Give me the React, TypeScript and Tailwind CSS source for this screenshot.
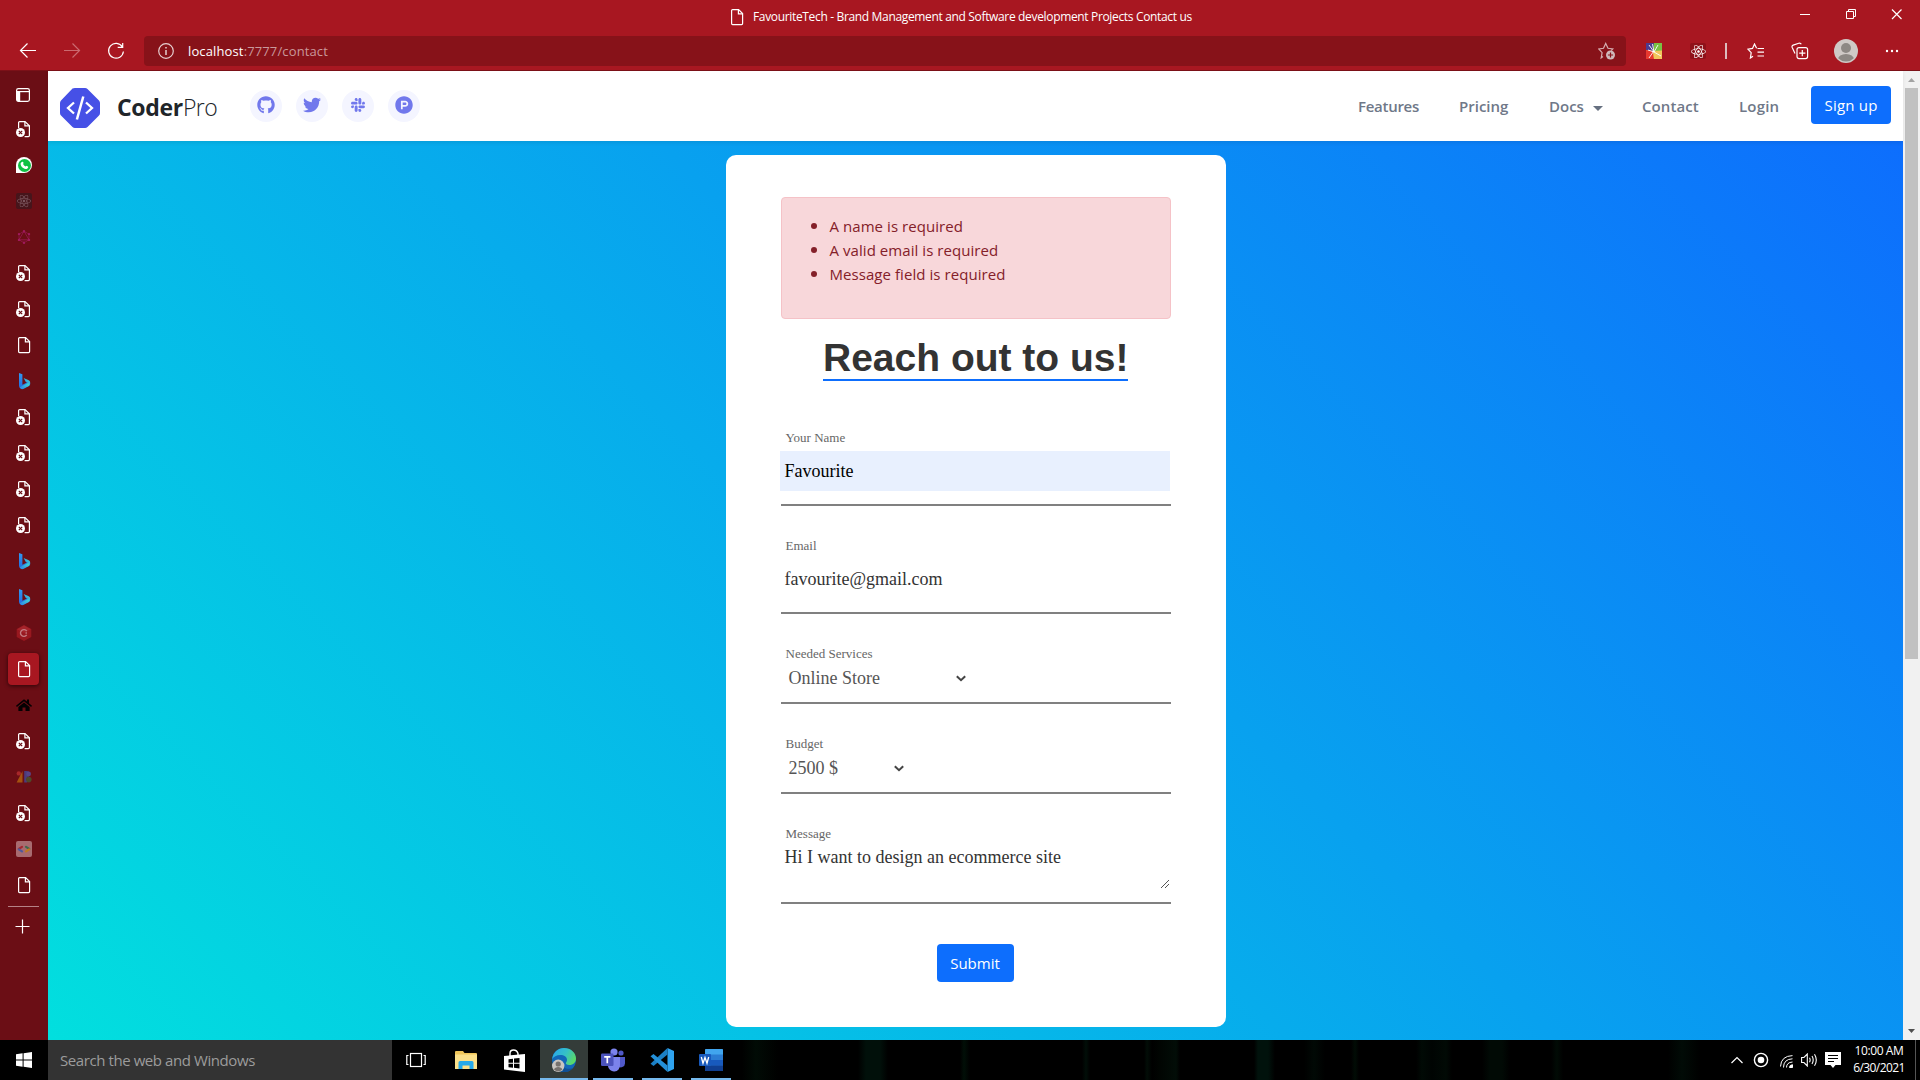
import type { ReactNode } from "react";
import { FaGithub, FaTwitter, FaSlack, FaProductHunt, FaReact } from "react-icons/fa";
import { SiGraphql } from "react-icons/si";

const PageIcon = () => (
  <svg width="16" height="18" viewBox="0 0 16 18" fill="none" stroke="#fff" strokeWidth="1.2" className="shrink-0">
    <path d="M2.6 2.6a1 1 0 0 1 1-1h6l4 4v10a1 1 0 0 1-1 1h-9a1 1 0 0 1-1-1z" />
    <path d="M9.4 1.8v4h4" />
  </svg>
);

const DeadPageIcon = () => (
  <svg width="16" height="18" viewBox="0 0 16 18" fill="none" className="shrink-0">
    <path d="M2.6 8V2.6a1 1 0 0 1 1-1h5.4l4.4 4.2v9.8a1 1 0 0 1-1 1H8.6" stroke="#fff" strokeWidth="1.2" />
    <path d="M8.9 1.8v4.1h4.4" stroke="#fff" strokeWidth="1.2" />
    <circle cx="4.5" cy="12.500" r="4.5" fill="#fff" />
    <path d="M2.800 10.800l3.400 3.400M6.200 10.800l-3.400 3.400" stroke="#6b0e15" strokeWidth="1.200" />
  </svg>
);

const BingIcon = () => (
  <svg width="16" height="18" viewBox="0 0 16 18">
    <defs>
      <linearGradient id="bingA" x1="0" y1="0" x2="0" y2="1">
        <stop offset="0" stopColor="#2f9af0" />
        <stop offset="1" stopColor="#2367e0" />
      </linearGradient>
      <linearGradient id="bingB" x1="0" y1="1" x2="1" y2="0">
        <stop offset="0" stopColor="#2b7bea" />
        <stop offset="1" stopColor="#43e0d0" />
      </linearGradient>
    </defs>
    <path d="M3 1l3.4 1.3v10.4L9 11.4l3-1.6 2 .8c.6 1.4 0 2.6-1 3.3L6.6 17 3 14.6z" fill="url(#bingA)" />
    <path d="M7.6 6l4.6 2c2 .9 2.4 2.6 1.6 4.4-1-1-2.2-1.5-4-2.3z" fill="url(#bingB)" />
    <path d="M3.2 14.7c1.5.6 2.6-.4 4.4-1.4l4.4-2.4c2 .4 2.2 2 .8 3L7.6 16.8c-1.6.9-3.6.2-4.4-2.1z" fill="url(#bingB)" />
  </svg>
);

const sidebarTabs: { key: string; icon: ReactNode; active?: boolean }[] = [
  { key: "d1", icon: <DeadPageIcon /> },
  {
    key: "whatsapp",
    icon: (
      <div className="grid size-4 place-items-center rounded-full rounded-bl-[3px] bg-white">
        <div className="grid size-[13px] place-items-center rounded-full bg-[#0fc143]">
          <svg width="9" height="9" viewBox="0 0 9 9">
            <path d="M2.2.8c.6-.4 1 .1 1.3 1 .2.6-.5.9-.4 1.2.5 1.2 1.4 2 2.5 2.5.4.1.7-.8 1.1-.6 1.3.5 1.9.7 1.4 1.5C7 8.4 5.1 8.2 3.2 6.9 1.7 5.9.6 4.3.6 2.9c0-.9.6-1.600 1.600-2.100z" fill="#fff" />
          </svg>
        </div>
      </div>
    ),
  },
  {
    key: "react",
    icon: (
      <div className="grid size-4 place-items-center rounded-[2px] bg-[#46151b]">
        <FaReact className="size-[14px] text-[#7b565e]" />
      </div>
    ),
  },
  { key: "graphql", icon: <SiGraphql className="size-[14px] text-[#a01a5c]" /> },
  { key: "d2", icon: <DeadPageIcon /> },
  { key: "d3", icon: <DeadPageIcon /> },
  { key: "p1", icon: <PageIcon /> },
  { key: "b1", icon: <BingIcon /> },
  { key: "d4", icon: <DeadPageIcon /> },
  { key: "d5", icon: <DeadPageIcon /> },
  { key: "d6", icon: <DeadPageIcon /> },
  { key: "d7", icon: <DeadPageIcon /> },
  { key: "b2", icon: <BingIcon /> },
  { key: "b3", icon: <BingIcon /> },
  {
    key: "c",
    icon: (
      <svg width="16" height="16" viewBox="0 0 16 16">
        <path d="M8 0l7.300 4v8L8 16 .7 12V4z" fill="#98181f" />
        <path d="M8 .6l6.800 3.700L8 8 1.200 4.300z" fill="#a5242b" />
        <path d="M10.700 6.100A3.400 3.400 0 1 0 10.700 9.900M10.900 8H9.500" fill="none" stroke="#c27a80" strokeWidth="1.400" />
      </svg>
    ),
  },
  { key: "p2", icon: <PageIcon />, active: true },
  {
    key: "home",
    icon: (
      <svg width="16" height="14" viewBox="0 0 16 14" fill="#050102">
        <path d="M8 1.200L0 7.800l.9 1.100L8 3.200l7.100 5.700.9-1.100-3-2.500V1.600h-2v2z" />
        <path d="M2.400 8.900L8 4.400l5.600 4.500V13H9.500V9.400h-3V13H2.400z" />
      </svg>
    ),
  },
  { key: "d8", icon: <DeadPageIcon /> },
  {
    key: "28",
    icon: (
      <svg width="16" height="12" viewBox="0 0 16 12">
        <circle cx="2.800" cy="2.400" r="2.200" fill="#a8272a" />
        <path d="M6.500 0v11.500H.6z" fill="#a5520f" />
        <path d="M8.200 0h2.600a3 3 0 0 1 0 6 3 3 0 0 1 0 5.500H8.200z" fill="#4b3c7c" />
        <circle cx="12.600" cy="3" r="2.400" fill="#574486" />
        <circle cx="12.800" cy="8.600" r="2.800" fill="#4e4a2a" />
      </svg>
    ),
  },
  { key: "d9", icon: <DeadPageIcon /> },
  {
    key: "dev",
    icon: (
      <svg width="16" height="16" viewBox="0 0 16 16" fill="none" strokeWidth="2.200" strokeLinecap="round">
        <rect width="16" height="16" rx="2" fill="#a86b70" />
        <path d="M6 5.800L2.800 7.900" stroke="#a5262f" />
        <path d="M2.800 8.300L6 10.400" stroke="#4f5a9c" />
        <path d="M10 5.800l3.200 2.100" stroke="#3d6a4e" />
        <path d="M13.200 8.300L10 10.400" stroke="#c07a1e" />
      </svg>
    ),
  },
  { key: "p3", icon: <PageIcon /> },
];

function TitleBar() {
  return (
    <div className="flex h-9 items-start text-white">
      <div className="flex h-[33px] items-center pl-[729px]">
        <PageIcon />
        <span className="ml-2 whitespace-nowrap text-[12px] tracking-[-0.34px]">
          FavouriteTech - Brand Management and Software development Projects Contact us
        </span>
      </div>
      <svg width="104" height="12" viewBox="0 0 104 12" fill="none" stroke="#fff" className="mt-2 mr-[17px] ml-auto">
        <path d="M1 6.500h10" />
        <path d="M47.500 3.500h7v7h-7zM49.500 3.500v-2h7v7h-2" />
        <path d="M93 1.500l9.500 9.500M102.500 1.500L93 11" strokeWidth="1.200" />
      </svg>
    </div>
  );
}

function AddressBar() {
  return (
    <div className="flex h-[34px] items-start">
      <svg width="144" height="30" viewBox="0 0 144 30" fill="none" stroke="#fff" strokeWidth="1.200">
        <path d="M36 14.500H20.500M27.500 7.500l-7 7 7 7" />
        <path d="M64 14.500h15.500M72.500 7.500l7 7-7 7" stroke="#cb6a70" />
        <path d="M122.400 11A7.400 7.400 0 1 0 123.400 15.500M122.700 7v4.300h-5" />
      </svg>
      <div className="flex h-[30px] w-[1482px] items-center rounded-[4px] bg-[#871219]">
        <svg width="16" height="16" viewBox="0 0 16 16" fill="none" stroke="#e6cfd0" strokeWidth="1.200" className="ml-[14px]">
          <circle cx="8" cy="8" r="7.300" />
          <path d="M8 7v5M8 4v1.500" strokeWidth="1.500" />
        </svg>
        <div className="ml-[14px] pt-px text-[13px] tracking-[0.13px] text-[#c9989b]">
          <span className="text-white">localhost</span>:7777/contact
        </div>
        <svg width="18" height="18" viewBox="0 0 18 18" className="mr-[10px] ml-auto">
          <path d="M5 14.500L3.200 15.800l.9-5.200L.8 7l4.700-.7L7.700 1.500 10 6.300l4.800.7-1.600 1.700" fill="none" stroke="#d5adb0" strokeWidth="1.200" />
          <circle cx="12.500" cy="13" r="4.500" fill="#cfb9ba" />
          <path d="M12.500 10.400v5.200M9.900 13h5.200" stroke="#871219" strokeWidth="1.200" />
        </svg>
      </div>
      <div className="flex h-[30px] flex-1 items-center">
        <svg width="16" height="16" viewBox="0 0 16 16" className="ml-5">
          <rect width="16" height="16" rx="1" fill="#e8b84b" />
          <path d="M0 0h9L7 8 0 7z" fill="#4c3a8f" />
          <path d="M8 0h8v8L7 9z" fill="#79c143" />
          <path d="M0 7l7 1 1 8H0z" fill="#e8392f" />
          <path d="M7 8l9-.5V16H8z" fill="#f2c75c" />
          <path d="M8 9L3 2M8 9L6.500 1M8 9l4-7M8 9L2 7M7.500 8.500L3 15M8 9l7 4" stroke="#fff" strokeWidth=".9" />
        </svg>
        <div className="ml-7 grid size-4 place-items-center rounded-[2px] bg-[#8f1119]">
          <FaReact className="size-[15px] text-white" />
        </div>
        <div className="ml-[19px] h-4 w-[2px] bg-[#dcbcbe]" />
        <svg width="18" height="16" viewBox="0 0 18 16" fill="none" stroke="#fff" strokeWidth="1.200" className="ml-[20px]">
          <path d="M6 13.200L3.400 15l.8-5.300L.9 6.100l4.600-.7L7.500 1l2.100 4.300" />
          <path d="M10.500 5.500H17M10.500 9.200H17M10.500 13H17" />
        </svg>
        <svg width="18" height="18" viewBox="0 0 18 18" fill="none" stroke="#fff" strokeWidth="1.200" className="ml-[26px]">
          <path d="M4 11.500L1.200 5.500c-.5-1.200 0-2 1-2.400L7.800 1.200c1-.3 2 .1 2.500 1.100" />
          <rect x="6" y="5.600" width="10.600" height="11" rx="2" />
          <path d="M11.300 8v6.200M8.200 11.100h6.200" />
        </svg>
        <svg width="24" height="24" viewBox="0 0 24 24" className="ml-[25px]">
          <defs>
            <clipPath id="avatar"><circle cx="12" cy="12" r="10.600" /></clipPath>
          </defs>
          <circle cx="12" cy="12" r="12" fill="#cfc9c6" />
          <g clipPath="url(#avatar)" fill="#8d8884">
            <circle cx="12" cy="9" r="5" />
            <ellipse cx="12" cy="20.500" rx="8" ry="5.500" />
          </g>
        </svg>
        <svg width="14" height="4" viewBox="0 0 14 4" fill="#fff" className="ml-[27px]">
          <circle cx="2" cy="2" r="1.200" />
          <circle cx="7" cy="2" r="1.200" />
          <circle cx="12" cy="2" r="1.200" />
        </svg>
      </div>
    </div>
  );
}

function Sidebar() {
  return (
    <aside className="flex w-12 flex-col bg-[#6b0e15] pt-2">
      <div className="grid h-8 place-items-center">
        <svg width="16" height="16" viewBox="0 0 16 16" className="-translate-x-px">
          <rect x="1.600" y="1.600" width="12.800" height="12.800" rx="1.800" fill="none" stroke="#fff" strokeWidth="1.200" />
          <path d="M1.600 4.600h12.800" stroke="#fff" strokeWidth="1.200" />
          <path d="M1.600 4.600h3.600v9.800H2.800l-1.200-1z" fill="#fff" />
        </svg>
      </div>
      {sidebarTabs.map((t) => (
        <div key={t.key} className="grid h-9 place-items-center">
          {t.active ? (
            <div className="mr-[1px] grid h-8 w-[31px] place-items-center rounded-[4px] bg-[#a81721] pl-px shadow-[0_1px_4px_rgba(0,0,0,0.6)]">
              {t.icon}
            </div>
          ) : (
            t.icon
          )}
        </div>
      ))}
      <div className="mx-2 mt-[3px] h-px w-[31px] bg-[#b58286]" />
      <svg width="16" height="16" viewBox="0 0 16 16" stroke="#fff" strokeWidth="1.200" className="mt-3 ml-[15px]">
        <path d="M7.500.5v14M.5 7.500h14" />
      </svg>
    </aside>
  );
}

const Badge = ({ children }: { children: ReactNode }) => (
  <div className="grid size-8 place-items-center rounded-full bg-[#f4f5ff] pb-0.5 text-[18px] text-[#7178ec]">{children}</div>
);

function Navbar() {
  return (
    <header className="z-10 flex h-[70px] shrink-0 items-start bg-white text-[15px] font-semibold text-[#6f7888] shadow-[0_2px_4px_rgba(0,0,0,0.08)]">
      <svg width="40" height="40" viewBox="0 0 40 40" className="mt-[17px] ml-3">
        <path d="M12.500.5Q13.500 0 15 0h10q1.500 0 2.500 1L39 12.500q1 1 1 2.500v10q0 1.500-1 2.500L27.500 39q-1 1-2.500 1H15q-1.500 0-2.500-1L1 27.500Q0 26.500 0 25V15q0-1.500 1-2.500z" fill="#4650e6" />
        <path d="M14 14.500L8 20l6 5.500M26 14.500l6 5.500-6 5.500" fill="none" stroke="#fff" strokeWidth="2.300" />
        <path d="M23.300 8.500L16.900 31.500" stroke="#fff" strokeWidth="2.500" />
      </svg>
      <div className="ml-[17px] h-[70px] w-[116px] text-[23px] leading-[72px] text-[#212529]">
        <span className="font-bold tracking-[-0.3px]">Coder</span>
        <span className="font-light tracking-[-0.6px]">Pro</span>
      </div>
      <div className="mt-[19px] ml-[17px] flex gap-[14px]">
        <Badge><FaGithub /></Badge>
        <Badge><FaTwitter /></Badge>
        <Badge><FaSlack className="text-[16px]" /></Badge>
        <Badge><FaProductHunt /></Badge>
      </div>
      <nav className="mr-3 ml-auto flex leading-[71px]">
        <span className="w-[101px] tracking-[-0.28px]">Features</span>
        <span className="w-[90px]">Pricing</span>
        <span className="flex w-[93px] items-center">
          <span className="w-[35px]">Docs</span>
          <svg width="10" height="5" viewBox="0 0 10 5" className="mt-1 ml-[9px]">
            <path d="M0 0h10L5 5z" fill="#667080" />
          </svg>
        </span>
        <span className="w-[97px] tracking-[0.1px]">Contact</span>
        <span className="w-[72px] tracking-[0.2px]">Login</span>
        <button className="mt-[15px] h-[38px] w-20 rounded-[4px] bg-[#0d6efd] text-[15px] leading-[38px] font-medium tracking-[0.2px] text-white">
          Sign up
        </button>
      </nav>
    </header>
  );
}

const Label = ({ children }: { children: ReactNode }) => (
  <div className="mt-8 h-4 pl-[5px] text-[13px] leading-4 text-[#666]">{children}</div>
);

const Chevron = () => (
  <svg width="10" height="7" viewBox="0 0 10 7" fill="none" stroke="#444" strokeWidth="2" className="mt-px">
    <path d="M.8 1.200L5 5.200l4.200-4" />
  </svg>
);

function ContactCard() {
  return (
    <section className="mt-[14px] h-[872px] w-[500px] rounded-[10px] bg-white px-[55px] pt-[42px]">
      <div className="h-[122px] rounded-[4px] border border-[#f5c2c7] bg-[#f8d7da] px-4 pt-[15px] text-[15px] leading-6 tracking-[0.06px] text-[#842029]">
        <ul className="list-disc pl-8 marker:text-[18px]">
          <li className="h-6">A name is required</li>
          <li className="h-6">A valid email is required</li>
          <li className="h-6">Message field is required</li>
        </ul>
      </div>
      <h1 className="mx-auto mt-4 h-[46px] w-[305px] border-b-2 border-[#0d6efd] text-center font-['Liberation_Sans',sans-serif] text-[39px] leading-[46px] font-bold whitespace-nowrap text-[#333]">
        Reach out to us!
      </h1>
      <form className="mt-[17px] flex flex-col font-['Liberation_Serif',serif] text-[18px] text-[#333]">
        <div className="h-[108px] border-b-2 border-[#808080]">
          <Label>Your Name</Label>
          <div className="mt-[5px] -ml-px h-10 w-[390px] bg-[#e8f0fe] pl-[5px] leading-10 text-black">Favourite</div>
        </div>
        <div className="h-[108px] border-b-2 border-[#808080]">
          <Label>Email</Label>
          <div className="mt-[5px] h-10 pl-1 leading-10">favourite@gmail.com</div>
        </div>
        <div className="h-[90px] border-b-2 border-[#808080]">
          <Label>Needed Services</Label>
          <div className="mt-1 flex h-6 items-center pl-2 leading-6 text-[#555]">
            <span className="w-[167px]">Online Store</span>
            <Chevron />
          </div>
        </div>
        <div className="h-[90px] border-b-2 border-[#808080]">
          <Label>Budget</Label>
          <div className="mt-1 flex h-6 items-center pl-2 leading-6 text-[#555]">
            <span className="w-[105px]">2500 $</span>
            <Chevron />
          </div>
        </div>
        <div className="h-[110px] border-b-2 border-[#808080]">
          <Label>Message</Label>
          <div className="mt-[3px] flex h-12 items-end justify-between pr-[2px] pl-1">
            <span className="h-12 leading-6">Hi I want to design an ecommerce site</span>
            <svg width="8" height="8" viewBox="0 0 8 8" stroke="#555" className="mb-[5px]">
              <path d="M0 8l8-8M4 8l4-4" />
            </svg>
          </div>
        </div>
        <button
          type="button"
          className="mt-10 ml-[156px] h-[38px] w-[77px] rounded-[4px] bg-[#0d6efd] font-['Open_Sans',sans-serif] text-[15px] leading-[38px] text-white"
        >
          Submit
        </button>
      </form>
    </section>
  );
}

function Scrollbar() {
  return (
    <div className="flex w-[17px] flex-col items-center bg-[#f1f1f1]">
      <svg width="17" height="17" viewBox="0 0 17 17"><path d="M5 11h7L8.500 7z" fill="#a3a3a3" /></svg>
      <div className="h-[571px] w-[13px] bg-[#c1c1c1]" />
      <svg width="17" height="17" viewBox="0 0 17 17" className="mt-auto"><path d="M5 6h7l-3.500 4z" fill="#505050" /></svg>
    </div>
  );
}

const TaskItem = ({ children, width, current }: { children: ReactNode; width: string; current?: boolean }) => (
  <div className={`${width} ${current ? "bg-[#343c39]" : ""} flex h-10 flex-col items-center`}>
    <div className="grid h-[38px] place-items-center pt-[2px]">{children}</div>
    <div className="h-0.5 w-full bg-[#76b9ed]" />
  </div>
);

function Taskbar() {
  return (
    <footer className="flex h-10 items-center bg-black bg-[linear-gradient(90deg,transparent_742px,#010b05_756px,transparent_778px,transparent_858px,#01100a_866px,#01100a_880px,transparent_888px,transparent_960px,#010f07_964px,transparent_970px,transparent_1082px,#010e08_1086px,transparent_1090px,transparent_1144px,#020d07_1147px,transparent_1152px,#010502_1160px,#020d07_1176px,transparent_1180px,transparent_1254px,#01120c_1258px,#01120c_1268px,transparent_1275px,transparent_1304px,#010905_1314px,transparent_1325px,transparent_1351px,#010c05_1355px,transparent_1359px,transparent_1416px,#010a05_1422px,#000402_1432px,#010a05_1446px,transparent_1452px,transparent_1482px,#010a05_1490px,#010a05_1502px,transparent_1510px,transparent_1551px,#010b05_1557px,transparent_1563px,transparent_1668px,#010b06_1682px,transparent_1700px)] text-white">
      <div className="grid w-12 place-items-center">
        <svg width="16" height="16" viewBox="0 0 16 16" fill="#fff">
          <path d="M0 2.300L6.600 1.300v6.300H0zM7.600 1.200L16 0v7.600H7.600zM0 8.500h6.600v6.300L0 13.800zM7.600 8.500H16V16l-8.400-1.200z" />
        </svg>
      </div>
      <div className="h-10 w-[344px] bg-[#333] pl-3 text-[15px] leading-[41px] tracking-[-0.42px] text-[#9c9c9c]">
        Search the web and Windows
      </div>
      <svg width="20" height="16" viewBox="0 0 20 16" fill="none" stroke="#fff" strokeWidth="1.200" className="ml-[14px]">
        <rect x="4.500" y="1.500" width="11" height="13" />
        <path d="M2.500 3.500H.8v9h1.700M17.500 3.500h1.700v9h-1.700" />
      </svg>
      <svg width="22" height="18" viewBox="0 0 22 18" className="ml-[29px]">
        <path d="M0 1.200Q0 0 1 0h7l1.500 2H21q1 0 1 1v14q0 1-1 1H1q-1 0-1-1z" fill="#f0c65a" />
        <path d="M0 3.500h22V18H0z" fill="#fbe08a" />
        <path d="M3.500 18v-6.500Q3.500 10 5 10h12q1.500 0 1.500 1.500V18h-4v-3.500h-7V18z" fill="#26a9ea" />
      </svg>
      <svg width="21" height="23" viewBox="0 0 21 23" className="ml-[27px]">
        <path d="M6 7V4.500Q6 1 9.500 1T14 4.500V6" fill="none" stroke="#fff" strokeWidth="1.400" />
        <path d="M0 7l21-2v18L0 20.500z" fill="#fff" />
        <path d="M4.500 10.200l4.500-.5v4H4.500zM10 9.600l5.500-.6v4.700H10zM4.500 14.700H9v4l-4.500-.5zM10 14.700h5.500v4.700l-5.500-.6z" fill="#000" />
      </svg>
      <div className="ml-[15px] flex gap-[5px]">
        <TaskItem width="w-12" current>
          <svg width="24" height="24" viewBox="0 0 24 24">
            <defs>
              <linearGradient id="edgeTop" x1="0" y1="0.300" x2="1" y2="0.700">
                <stop offset="0" stopColor="#2aa9e8" />
                <stop offset="0.500" stopColor="#35c1c6" />
                <stop offset="1" stopColor="#5fdc5c" />
              </linearGradient>
            </defs>
            <circle cx="12" cy="12" r="12" fill="#1267b8" />
            <path d="M.2 11C1 4.500 6 0 12 0c7 0 12 5 12 10.500 0 4-3 6.500-6.500 6.500-3 0-4-1.200-3.600-2.200.8-1 1.100-1.800 1.100-3C15 9 12 7 8.500 7 4.500 7 1.500 9 .2 11z" fill="url(#edgeTop)" />
            <path d="M9 12c-1 6 4 10.500 11.500 8.300C18 23.500 14.500 24.500 10 23.800 6 22 5 14.500 9 12z" fill="#0f4f95" />
            <circle cx="6.200" cy="17.800" r="6.200" fill="#c9c5c1" />
            <circle cx="6.200" cy="16" r="2.600" fill="#77726e" />
            <path d="M2 21.500c.8-3.400 7.600-3.400 8.400 0-2 2.400-6.400 2.400-8.400 0z" fill="#77726e" />
          </svg>
        </TaskItem>
        <TaskItem width="w-10">
          <svg width="24" height="24" viewBox="0 0 24 24">
            <circle cx="20" cy="5" r="2.600" fill="#5059c9" />
            <path d="M15 9h9v6.500a4 4 0 0 1-7 2.500z" fill="#5059c9" />
            <circle cx="13" cy="4" r="3.600" fill="#7b83eb" />
            <path d="M7 9h12v8a6 6 0 0 1-12 1z" fill="#7b83eb" />
            <rect y="5.500" width="12.500" height="12.500" rx="1.200" fill="#4b53bc" />
            <path d="M3.200 8.800h6.200M6.300 8.800v6.500" stroke="#fff" strokeWidth="1.700" />
          </svg>
        </TaskItem>
        <TaskItem width="ml-1 w-10">
          <svg width="24" height="24" viewBox="0 0 24 24">
            <path d="M17.500 0L24 3v18l-6.500 3z" fill="#2fa3ee" />
            <path d="M17.500 0v6.500L3.500 18 .5 15.800z" fill="#1b7fc4" />
            <path d="M17.500 24v-6.500L3.500 6 .5 8.200z" fill="#2490d8" />
          </svg>
        </TaskItem>
        <TaskItem width="ml-1 w-10">
          <svg width="24" height="22" viewBox="0 0 24 22">
            <rect x="6" width="18" height="22" rx="1.200" fill="#2b7cd3" />
            <path d="M6 1.200Q6 0 7.200 0h15.600Q24 0 24 1.200V5.500H6z" fill="#41a5ee" />
            <path d="M6 11h18v5.500H6z" fill="#185abd" />
            <path d="M6 16.500h18v4.300q0 1.200-1.200 1.200H7.200Q6 22 6 20.800z" fill="#103f91" />
            <rect y="5" width="12" height="12" rx="1" fill="#185abd" />
            <path d="M2.300 8l1.700 6.200L6 8.500l2 5.700L9.700 8" fill="none" stroke="#fff" strokeWidth="1.300" />
          </svg>
        </TaskItem>
      </div>
      <div className="ml-auto flex h-10 items-center">
        <svg width="12" height="8" viewBox="0 0 12 8" fill="none" stroke="#fff" strokeWidth="1.200"><path d="M.5 7L6 1.500 11.500 7" /></svg>
        <svg width="16" height="16" viewBox="0 0 16 16" className="ml-[10px]">
          <circle cx="8" cy="8" r="6.600" fill="none" stroke="#fff" strokeWidth="1.400" />
          <circle cx="8" cy="8" r="3.300" fill="#fff" />
        </svg>
        <svg width="13" height="13" viewBox="0 0 13 13" fill="none" stroke="#fff" className="mt-[2px] ml-[11px]">
          <path d="M.5 11.500Q1 1 12.500.6M3.500 12.500Q3.500 4.200 12.500 3.800M6.500 12.500Q6.500 7.400 12.500 7" />
          <path d="M9.500 12.500q0-2.500 3-2.800v2.800z" fill="#fff" />
        </svg>
        <svg width="17" height="14" viewBox="0 0 17 14" fill="none" stroke="#fff" strokeWidth="1.100" className="ml-2">
          <path d="M.6 4.500h2.300L6.300 1v12L2.900 9.500H.6zM8.500 4.800q1.300 2.200 0 4.400M11 3q2.400 4 0 8M13.500 1.200q3.600 5.800 0 11.600" />
        </svg>
        <svg width="16" height="16" viewBox="0 0 16 16" className="ml-[7px]">
          <path d="M0 0h16v13h-5.500L8 16l-2.500-3H0z" fill="#fff" />
          <path d="M3 3.500h10M3 6.500h10M3 9.500h6" stroke="#000" strokeWidth="1.200" />
        </svg>
        <div className="ml-[11px] w-[54px] pb-[2px] text-center text-[12px] leading-[17px]">
          <div className="tracking-[-0.4px]">10:00 AM</div>
          <div className="tracking-[-0.6px]">6/30/2021</div>
        </div>
        <div className="mr-1 ml-[9px] h-10 w-px bg-[#555]" />
      </div>
    </footer>
  );
}

export default function App() {
  return (
    <div className="flex h-[1080px] w-[1920px] flex-col overflow-hidden bg-[#a81721] font-['Open_Sans',sans-serif]">
      <TitleBar />
      <AddressBar />
      <div className="flex h-[970px] border-t border-[#7c1118] bg-[#6b0e15]">
        <Sidebar />
        <main className="flex flex-1 flex-col bg-white">
          <Navbar />
          <div className="flex flex-1 justify-center bg-[linear-gradient(45deg,#02dfde,#0d6efd)]">
            <ContactCard />
          </div>
        </main>
        <Scrollbar />
      </div>
      <Taskbar />
    </div>
  );
}
